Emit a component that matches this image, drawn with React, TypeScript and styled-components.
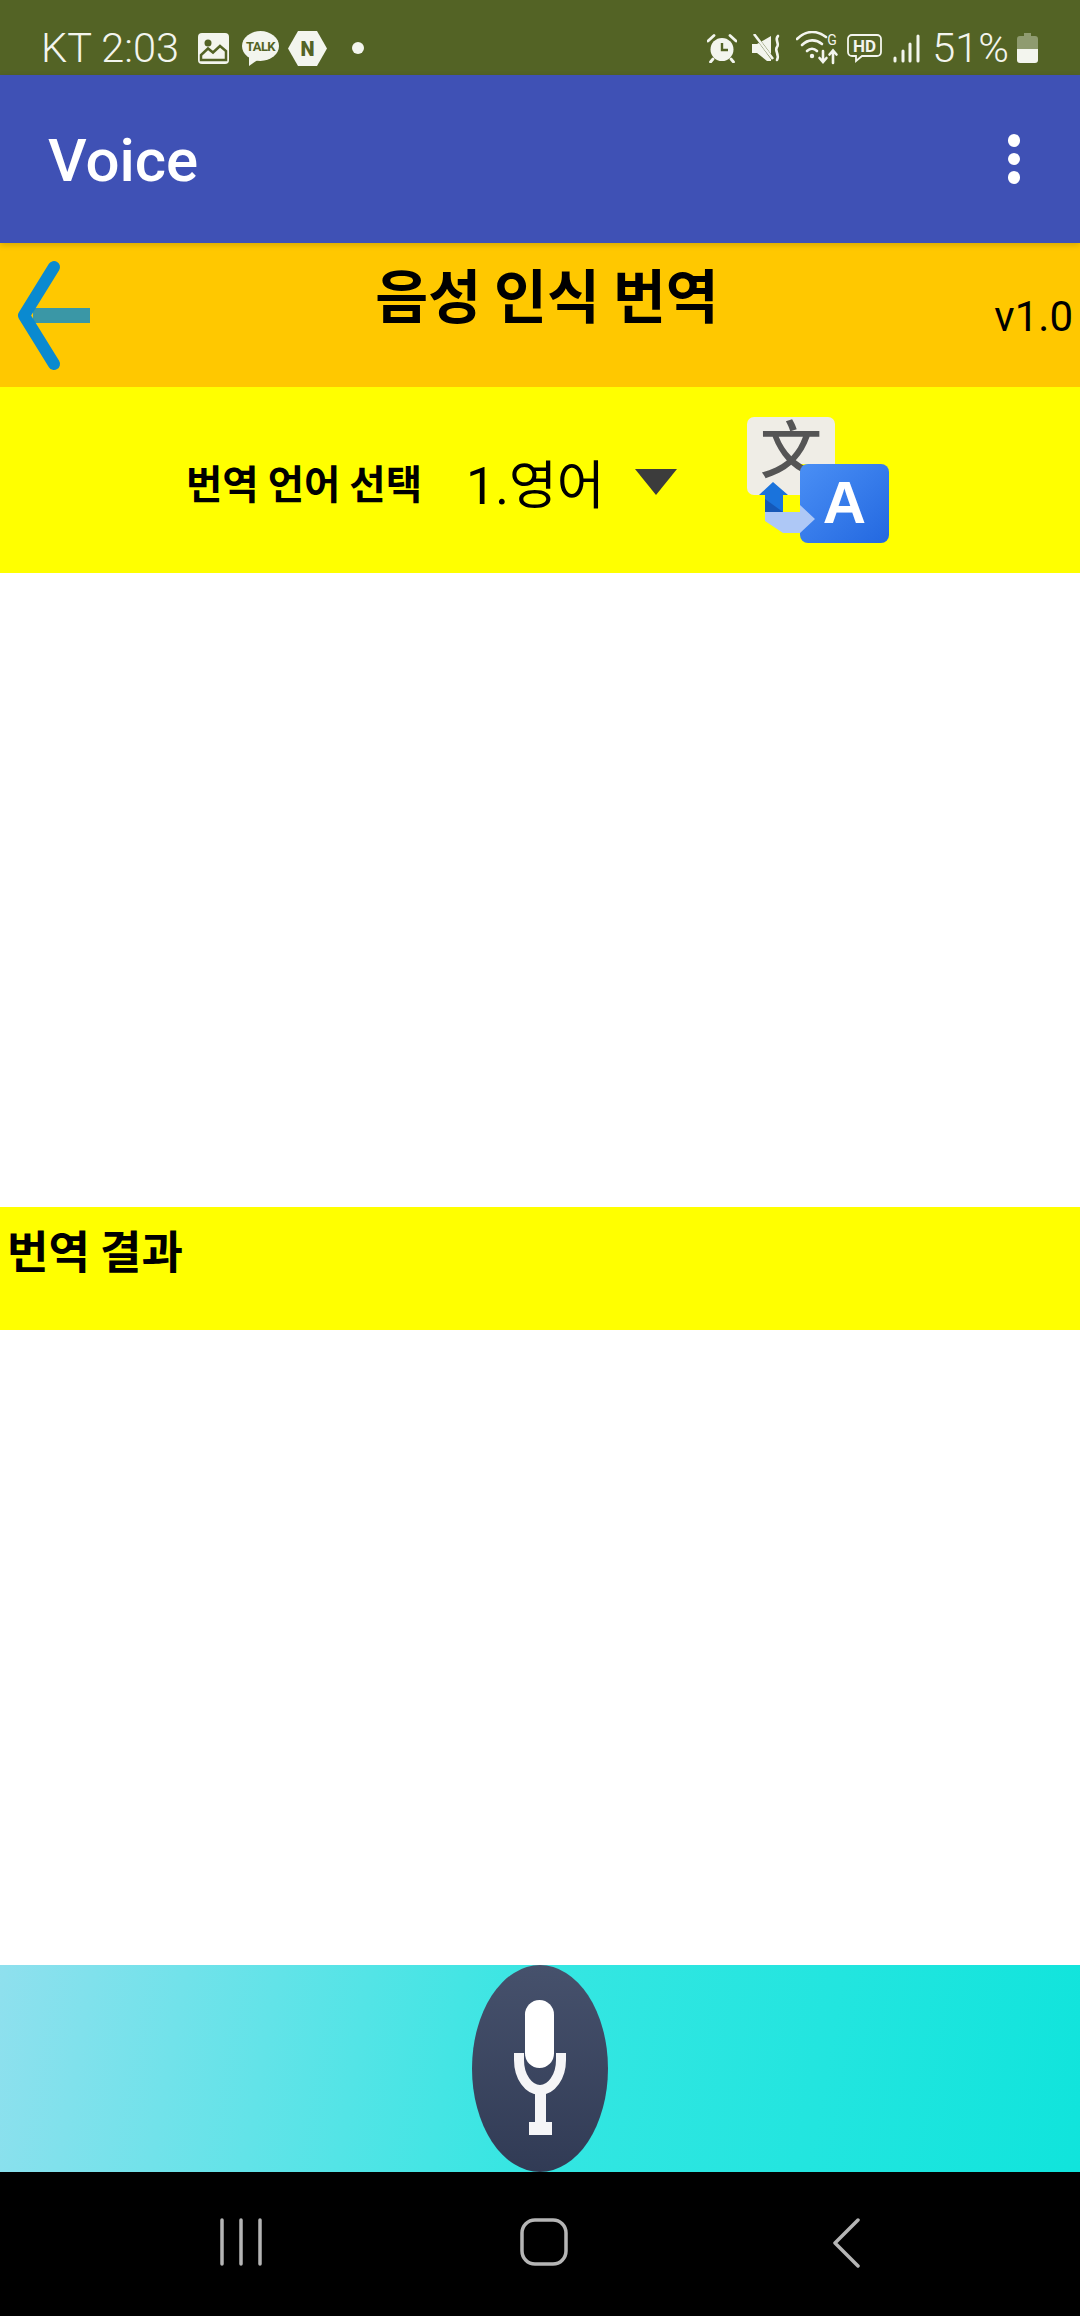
import React from "react";
import styled, { createGlobalStyle } from "styled-components";

const GlobalStyle = createGlobalStyle`
  html, body {
    margin: 0;
    padding: 0;
    background: #ffffff;
  }
  * {
    box-sizing: border-box;
  }
`;

const KR = `"Noto Sans CJK KR", "Roboto", sans-serif`;

const Screen = styled.div`
  display: flex;
  flex-direction: column;
  width: 1080px;
  height: 2316px;
  font-family: "Roboto", "Noto Sans CJK KR", sans-serif;
`;

const StatusBar = styled.div`
  display: flex;
  align-items: center;
  justify-content: space-between;
  flex: 0 0 75px;
  padding: 21px 42px 0 41px;
  background: #536325;
  color: #f3f5ee;
`;
const StatusGroup = styled.div`
  display: flex;
  align-items: center;
`;
const StatusText = styled.span<{ $gap?: number }>`
  margin-left: ${(p) => p.$gap ?? 0}px;
  font-size: 41.5px;
  font-weight: 300;
  line-height: 48px;
  white-space: nowrap;
`;
const StatusIcon = styled.svg<{ $gap?: number }>`
  display: block;
  flex: none;
  margin-left: ${(p) => p.$gap ?? 0}px;
`;

const AppBar = styled.div`
  position: relative;
  z-index: 1;
  display: flex;
  align-items: center;
  justify-content: space-between;
  flex: 0 0 168px;
  padding: 0 60px 0 48px;
  background: #3f51b5;
  box-shadow: 0 2px 6px rgba(0, 0, 0, 0.16);
`;
const AppTitle = styled.div`
  padding-top: 3px;
  color: #ffffff;
  font-size: 60px;
  font-weight: 500;
`;
const Overflow = styled.div`
  display: flex;
  flex-direction: column;
  gap: 6px;
`;
const Dot = styled.span`
  width: 12.5px;
  height: 12.5px;
  border-radius: 50%;
  background: #ffffff;
`;

const TitleBar = styled.div`
  display: grid;
  grid-template-columns: 120px 1fr 120px;
  flex: 0 0 144px;
  background: #ffc800;
  color: #000000;
`;
const BackIcon = styled.svg`
  display: block;
  margin: 15px 0 0 15px;
`;
const Title = styled.div`
  padding-top: 8px;
  padding-left: 14px;
  font-family: ${KR};
  font-size: 57.5px;
  font-weight: 700;
  line-height: 84px;
  text-align: center;
`;
const Version = styled.div`
  padding: 50px 7px 0 0;
  font-size: 42px;
  line-height: 48px;
  text-align: right;
`;

const LanguageBar = styled.div`
  display: flex;
  align-items: center;
  flex: 0 0 186px;
  padding: 0 0 0 186px;
  background: #ffff00;
  color: #000000;
`;
const LanguageLabel = styled.div`
  width: 280px;
  padding-top: 2px;
  font-family: ${KR};
  font-size: 39.5px;
  font-weight: 700;
`;
const LanguageValue = styled.div`
  width: 169px;
  padding-top: 2px;
  font-family: "Roboto", "Noto Sans CJK KR", sans-serif;
  font-size: 52px;
`;
const SpinnerArrow = styled.div`
  width: 0;
  height: 0;
  margin-top: 4px;
  border-left: 21px solid transparent;
  border-right: 21px solid transparent;
  border-top: 26px solid #3c3c3c;
`;
const TranslateIcon = styled.svg`
  display: block;
  flex: none;
  margin: 0 0 0 70px;
`;

const TextPane = styled.div`
  flex: 0 0 634px;
  background: #ffffff;
`;
const ResultPane = styled(TextPane)`
  flex: 0 0 635px;
`;
const ResultBar = styled.div`
  flex: 0 0 123px;
  padding: 10px 0 0 7px;
  background: #ffff00;
  color: #000000;
  font-family: ${KR};
  font-size: 45px;
  font-weight: 700;
  line-height: 66px;
`;

const MicBar = styled.div`
  display: flex;
  justify-content: center;
  flex: 0 0 207px;
  background: linear-gradient(100deg, #8fe0ee 0%, #35e6e2 50%, #10e4dc 100%);
`;
const MicButton = styled.button`
  display: block;
  width: 136px;
  height: 207px;
  padding: 0;
  border: none;
  border-radius: 50%;
  background: linear-gradient(180deg, #46516c 0%, #313b55 100%);
`;

const NavBar = styled.div`
  display: grid;
  grid-template-columns: repeat(3, 302.5px);
  justify-items: center;
  flex: 0 0 144px;
  padding: 46px 0 0 90px;
  background: #000000;
`;

function ImageIcon() {
  return (
    <StatusIcon $gap={19} width="31" height="31" viewBox="0 0 31 31">
      <rect width="31" height="31" rx="4" fill="#f3f5ee" />
      <circle cx="10" cy="10" r="3.5" fill="#536325" />
      <path
        d="M3 27V22L10 15.5L15 19.5L22 13L28 18V27Z"
        fill="none"
        stroke="#536325"
        strokeWidth="2.5"
      />
    </StatusIcon>
  );
}

function TalkIcon() {
  return (
    <StatusIcon $gap={13} width="37" height="35" viewBox="0 0 37 35">
      <ellipse cx="18.5" cy="15" rx="18.5" ry="15" fill="#f3f5ee" />
      <path d="M7 24L7 35L17 28Z" fill="#f3f5ee" />
      <text
        x="18.5"
        y="20"
        textAnchor="middle"
        fontFamily="Roboto, sans-serif"
        fontSize="13"
        fontWeight="700"
        letterSpacing="-0.6"
        fill="#536325"
      >
        TALK
      </text>
    </StatusIcon>
  );
}

function NaverIcon() {
  return (
    <StatusIcon $gap={9} width="39" height="35" viewBox="0 0 39 35">
      <path d="M10 0H29L39 17.5L29 35H10L0 17.5Z" fill="#f3f5ee" />
      <text
        x="19.5"
        y="25"
        textAnchor="middle"
        fontFamily="Roboto, sans-serif"
        fontSize="20"
        fontWeight="900"
        fill="#536325"
      >
        N
      </text>
    </StatusIcon>
  );
}

function NoticeDot() {
  return (
    <StatusIcon $gap={25} width="12" height="12" viewBox="0 0 12 12">
      <circle cx="6" cy="6" r="6" fill="#f3f5ee" />
    </StatusIcon>
  );
}

function AlarmIcon() {
  return (
    <StatusIcon width="30" height="29" viewBox="0 0 30 29">
      <circle cx="15" cy="15.5" r="11.5" fill="#f3f5ee" />
      <path d="M15 9V16H21" fill="none" stroke="#536325" strokeWidth="2.4" />
      <path
        d="M1 7L7 1.5M29 7L23 1.5M6 25L3.5 28M24 25L26.5 28"
        fill="none"
        stroke="#f3f5ee"
        strokeWidth="2.8"
        strokeLinecap="round"
      />
    </StatusIcon>
  );
}

function MuteIcon() {
  return (
    <StatusIcon $gap={15} width="30" height="28" viewBox="0 0 30 28">
      <path d="M0 10H5L19 2V27L15 27L5 19H0Z" fill="#f3f5ee" />
      <path d="M3 1L20 24" stroke="#536325" strokeWidth="3" />
      <path d="M2 0L21 25" stroke="#f3f5ee" strokeWidth="2.6" />
      <path
        d="M26 2C22 6 28 9 25 13C22 17 28 20 25 26"
        fill="none"
        stroke="#f3f5ee"
        strokeWidth="2.6"
        strokeLinecap="round"
      />
    </StatusIcon>
  );
}

function WifiIcon() {
  return (
    <StatusIcon $gap={14} width="44" height="34" viewBox="0 0 44 34">
      <g fill="none" stroke="#f3f5ee" strokeWidth="2.6" strokeLinecap="round">
        <path d="M1 8C10 -1 21 -1 30 6" />
        <path d="M6 14C12 8 20 8 26 13" />
        <path d="M11 20C14 17 18 17 21 20" />
        <path d="M27 20V30M23.5 27L27 31L30.5 27" />
        <path d="M37 32V20M33.5 23.5L37 19.5L40.5 23.5" />
      </g>
      <circle cx="16" cy="25" r="2.2" fill="#f3f5ee" />
      <text
        x="36"
        y="14"
        textAnchor="middle"
        fontFamily="Roboto, sans-serif"
        fontSize="14"
        fill="#f3f5ee"
      >
        G
      </text>
    </StatusIcon>
  );
}

function HdIcon() {
  return (
    <StatusIcon $gap={7} width="35" height="29" viewBox="0 0 35 29">
      <path
        d="M5 1H30A4 4 0 0 1 34 5V18A4 4 0 0 1 30 22H15L9 27V22H5A4 4 0 0 1 1 18V5A4 4 0 0 1 5 1Z"
        fill="none"
        stroke="#f3f5ee"
        strokeWidth="1.8"
      />
      <text
        x="17.5"
        y="18"
        textAnchor="middle"
        fontFamily="Roboto, sans-serif"
        fontSize="17"
        fontWeight="700"
        fill="#f3f5ee"
      >
        HD
      </text>
    </StatusIcon>
  );
}

function SignalIcon() {
  return (
    <StatusIcon $gap={11} width="27" height="29" viewBox="0 0 27 29">
      <g fill="none" stroke="#f3f5ee" strokeWidth="3" strokeLinecap="round">
        <path d="M2 24V27" />
        <path d="M10 17V27" />
        <path d="M17 10V27" />
        <path d="M25 2V27" />
      </g>
    </StatusIcon>
  );
}

function BatteryIcon() {
  return (
    <StatusIcon $gap={8} width="21" height="30" viewBox="0 0 21 30">
      <path
        d="M7 0H14V3H18A3 3 0 0 1 21 6V16H0V6A3 3 0 0 1 3 3H7Z"
        fill="#8f9b70"
      />
      <path d="M0 16H21V27A3 3 0 0 1 18 30H3A3 3 0 0 1 0 27Z" fill="#f3f5ee" />
    </StatusIcon>
  );
}

function TranslateLogo() {
  return (
    <TranslateIcon width="143" height="127" viewBox="0 0 143 127">
      <defs>
        <linearGradient id="translateBlue" x1="0" y1="0" x2="1" y2="1">
          <stop offset="0" stopColor="#4a8ff5" />
          <stop offset="1" stopColor="#2368e0" />
        </linearGradient>
      </defs>
      <path
        d="M7 0H81A7 7 0 0 1 88 7V47H53V78H7A7 7 0 0 1 0 71V7A7 7 0 0 1 7 0Z"
        fill="#efede6"
      />
      <text
        x="44"
        y="56"
        textAnchor="middle"
        fontFamily="'Noto Sans CJK SC', sans-serif"
        fontSize="62"
        fontWeight="500"
        fill="#555555"
      >
        文
      </text>
      <rect x="53" y="47" width="89" height="79" rx="8" fill="url(#translateBlue)" />
      <path d="M26 65L41 78H36V95H18V78H12Z" fill="#1a73dc" />
      <path d="M18 95V82L36 95Z" fill="#1558b8" />
      <path d="M18 95H53V88L68 102L53 116H36L18 104Z" fill="#aec8f6" />
      <text
        x="97.5"
        y="106"
        textAnchor="middle"
        fontFamily="'Liberation Sans', sans-serif"
        fontSize="60"
        fontWeight="700"
        fill="#ffffff"
      >
        A
      </text>
    </TranslateIcon>
  );
}

export default function App() {
  return (
    <Screen>
      <GlobalStyle />
      <StatusBar>
        <StatusGroup>
          <StatusText>KT 2:03</StatusText>
          <ImageIcon />
          <TalkIcon />
          <NaverIcon />
          <NoticeDot />
        </StatusGroup>
        <StatusGroup>
          <AlarmIcon />
          <MuteIcon />
          <WifiIcon />
          <HdIcon />
          <SignalIcon />
          <StatusText $gap={12}>51%</StatusText>
          <BatteryIcon />
        </StatusGroup>
      </StatusBar>

      <AppBar>
        <AppTitle>Voice</AppTitle>
        <Overflow>
          <Dot />
          <Dot />
          <Dot />
        </Overflow>
      </AppBar>

      <TitleBar>
        <BackIcon width="80" height="115" viewBox="0 0 80 115">
          <path d="M18 50H75V65H18Z" fill="#3a97a6" />
          <path
            d="M39 9L9 57.5L39 106"
            fill="none"
            stroke="#0a8ad0"
            strokeWidth="12"
            strokeLinecap="round"
            strokeLinejoin="round"
          />
        </BackIcon>
        <Title>음성 인식 번역</Title>
        <Version>v1.0</Version>
      </TitleBar>

      <LanguageBar>
        <LanguageLabel>번역 언어 선택</LanguageLabel>
        <LanguageValue>1.영어</LanguageValue>
        <SpinnerArrow />
        <TranslateLogo />
      </LanguageBar>

      <TextPane />

      <ResultBar>번역 결과</ResultBar>

      <ResultPane />

      <MicBar>
        <MicButton aria-label="mic">
          <svg width="136" height="207" viewBox="0 0 136 207" display="block">
            <rect x="53" y="35" width="29" height="68" rx="14.5" fill="#ffffff" />
            <path
              d="M47 88V95A21 30 0 0 0 89 95V88"
              fill="none"
              stroke="#f5f5f7"
              strokeWidth="10"
            />
            <rect x="63" y="128" width="11" height="32" fill="#f5f5f7" />
            <rect x="57" y="157" width="23" height="13" fill="#f5f5f7" />
          </svg>
        </MicButton>
      </MicBar>

      <NavBar>
        <svg width="42" height="48" viewBox="0 0 42 48">
          <g stroke="#b5b5b5" strokeWidth="3.5" strokeLinecap="round">
            <path d="M2 2V46M21 2V46M40 2V46" />
          </g>
        </svg>
        <svg width="48" height="48" viewBox="0 0 48 48">
          <rect
            x="2"
            y="2"
            width="44"
            height="44"
            rx="13"
            fill="none"
            stroke="#b5b5b5"
            strokeWidth="3.5"
          />
        </svg>
        <svg width="28" height="50" viewBox="0 0 28 50">
          <path
            d="M26 2L3 25L26 48"
            fill="none"
            stroke="#b5b5b5"
            strokeWidth="3.5"
            strokeLinecap="round"
            strokeLinejoin="round"
          />
        </svg>
      </NavBar>
    </Screen>
  );
}
